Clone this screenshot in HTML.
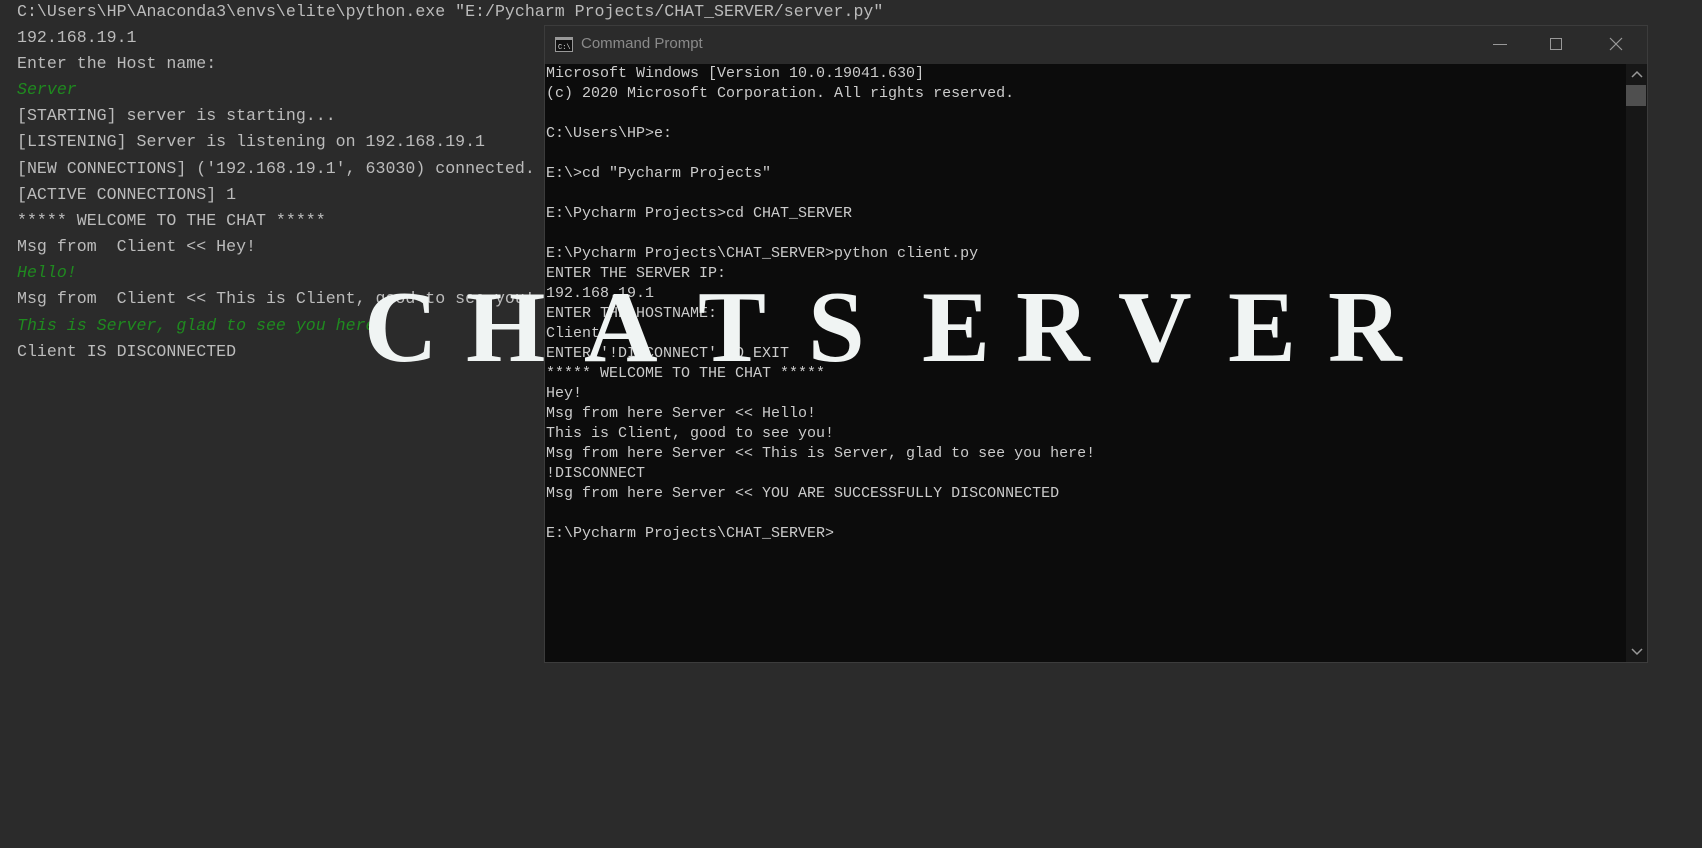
<!DOCTYPE html>
<html><head><meta charset="utf-8"><style>
*{margin:0;padding:0;box-sizing:border-box}
body{width:1702px;height:848px;background:#2b2b2b;overflow:hidden;position:relative;font-family:"Liberation Mono",monospace}
.l{position:absolute;left:17px;font-size:16.6px;color:#bbbbbb;white-space:pre;line-height:26px}
.g{color:#1f8a1f;font-style:italic}
#win{position:absolute;left:544px;top:25px;width:1104px;height:638px;background:#0c0c0c;border:1px solid #3c3c3c}
#tb{position:absolute;left:0;top:0;right:0;height:38px;background:#2b2b2b}
#tb .t{position:absolute;left:36px;top:9px;font-family:"Liberation Sans",sans-serif;font-size:15px;color:#8a8a8a}
.c{position:absolute;left:1px;font-size:15px;color:#cccccc;white-space:pre;line-height:20px}
.b{position:absolute;top:277px;font-family:"Liberation Serif",serif;font-weight:bold;font-size:102px;line-height:102px;color:#f0f4f3}
</style></head><body>
<div class="l" style="top:-1px">C:\Users\HP\Anaconda3\envs\elite\python.exe "E:/Pycharm Projects/CHAT_SERVER/server.py"</div>
<div class="l" style="top:25px">192.168.19.1</div>
<div class="l" style="top:51px">Enter the Host name:</div>
<div class="l g" style="top:77px">Server</div>
<div class="l" style="top:103px">[STARTING] server is starting...</div>
<div class="l" style="top:129px">[LISTENING] Server is listening on 192.168.19.1</div>
<div class="l" style="top:156px">[NEW CONNECTIONS] ('192.168.19.1', 63030) connected.</div>
<div class="l" style="top:182px">[ACTIVE CONNECTIONS] 1</div>
<div class="l" style="top:208px">***** WELCOME TO THE CHAT *****</div>
<div class="l" style="top:234px">Msg from  Client &lt;&lt; Hey!</div>
<div class="l g" style="top:260px">Hello!</div>
<div class="l" style="top:286px">Msg from  Client &lt;&lt; This is Client, good to see you!</div>
<div class="l g" style="top:313px">This is Server, glad to see you here!</div>
<div class="l" style="top:339px">Client IS DISCONNECTED</div>
<div id="win">
<div id="tb">
<svg style="position:absolute;left:10px;top:11px" width="18" height="15"><rect x="0.5" y="0.5" width="17" height="14" fill="#111" stroke="#999"/><rect x="1" y="1" width="16" height="2" fill="#999"/><text x="3" y="12" font-size="7" fill="#ddd" font-family="Liberation Mono">C:\</text></svg>
<div class="t">Command Prompt</div>
<div style="position:absolute;left:948px;top:18px;width:14px;height:1px;background:#999"></div>
<div style="position:absolute;left:1005px;top:12px;width:12px;height:12px;border:1px solid #999"></div>
<svg style="position:absolute;left:1064px;top:11px" width="14" height="14"><path d="M1 1L13 13M13 1L1 13" stroke="#999" stroke-width="1.2"/></svg>
</div>
<div style="position:absolute;left:1081px;top:38px;width:21px;height:598px;background:#171717"></div>
<svg style="position:absolute;left:1086px;top:44px" width="12" height="8"><path d="M1 7L6 2L11 7" stroke="#999" stroke-width="1.5" fill="none"/></svg>
<div style="position:absolute;left:1081px;top:59px;width:20px;height:21px;background:#4f4f4f"></div>
<svg style="position:absolute;left:1086px;top:622px" width="12" height="8"><path d="M1 1L6 6L11 1" stroke="#999" stroke-width="1.5" fill="none"/></svg>
<div class="c" style="top:38px">Microsoft Windows [Version 10.0.19041.630]</div>
<div class="c" style="top:58px">(c) 2020 Microsoft Corporation. All rights reserved.</div>
<div class="c" style="top:98px">C:\Users\HP&gt;e:</div>
<div class="c" style="top:138px">E:\&gt;cd "Pycharm Projects"</div>
<div class="c" style="top:178px">E:\Pycharm Projects&gt;cd CHAT_SERVER</div>
<div class="c" style="top:218px">E:\Pycharm Projects\CHAT_SERVER&gt;python client.py</div>
<div class="c" style="top:238px">ENTER THE SERVER IP:</div>
<div class="c" style="top:258px">192.168.19.1</div>
<div class="c" style="top:278px">ENTER THE HOSTNAME:</div>
<div class="c" style="top:298px">Client</div>
<div class="c" style="top:318px">ENTER '!DISCONNECT' TO EXIT</div>
<div class="c" style="top:338px">***** WELCOME TO THE CHAT *****</div>
<div class="c" style="top:358px">Hey!</div>
<div class="c" style="top:378px">Msg from here Server &lt;&lt; Hello!</div>
<div class="c" style="top:398px">This is Client, good to see you!</div>
<div class="c" style="top:418px">Msg from here Server &lt;&lt; This is Server, glad to see you here!</div>
<div class="c" style="top:438px">!DISCONNECT</div>
<div class="c" style="top:458px">Msg from here Server &lt;&lt; YOU ARE SUCCESSFULLY DISCONNECTED</div>
<div class="c" style="top:498px">E:\Pycharm Projects\CHAT_SERVER&gt;</div>
</div>
<div class="b" style="left:364px">C</div>
<div class="b" style="left:466px">H</div>
<div class="b" style="left:584px">A</div>
<div class="b" style="left:698px">T</div>
<div class="b" style="left:808px">S</div>
<div class="b" style="left:922px">E</div>
<div class="b" style="left:1016px">R</div>
<div class="b" style="left:1118px">V</div>
<div class="b" style="left:1228px">E</div>
<div class="b" style="left:1328px">R</div>
</body></html>
